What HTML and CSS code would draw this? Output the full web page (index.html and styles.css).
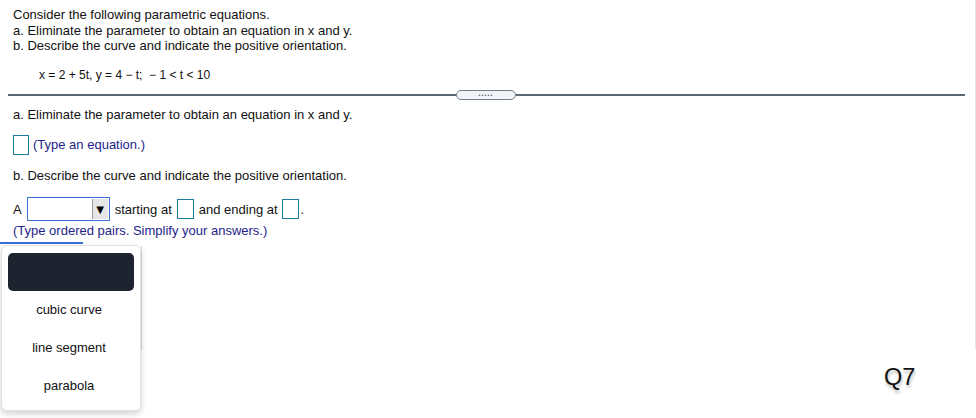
FILE: index.html
```html
<!DOCTYPE html>
<html>
<head>
<meta charset="utf-8">
<link rel="stylesheet" href="styles.css">
</head>
<body>
<div class="page">
  <p class="line">Consider the following parametric equations.</p>
  <p class="line">a. Eliminate the parameter to obtain an equation in x and y.</p>
  <p class="line">b. Describe the curve and indicate the positive orientation.</p>
  <p class="line equation">x = 2 + 5t, y = 4 − t; &nbsp;− 1 &lt; t &lt; 10</p>

  <div class="divider">
    <span class="rule rule-left"></span>
    <span class="pill"><span class="dots">•••••</span></span>
    <span class="rule rule-right"></span>
  </div>

  <p class="line part-a">a. Eliminate the parameter to obtain an equation in x and y.</p>
  <div class="answer-row">
    <span class="box"></span>
    <span class="hint">(Type an equation.)</span>
  </div>

  <p class="line part-b">b. Describe the curve and indicate the positive orientation.</p>
  <div class="select-row">
    <span class="word-a">A</span>
    <span class="select"><span class="select-arrow">▼</span></span>
    <span class="txt">starting at</span>
    <span class="box box-start"></span>
    <span class="txt">and ending at</span>
    <span class="box box-end"></span>
    <span class="txt">.</span>
  </div>
  <p class="line hint hint-pairs">(Type ordered pairs. Simplify your answers.)</p>
  <div class="focus-line"></div>
</div>

<div class="behind-edge"></div>
<div class="menu">
  <div class="option option-active"></div>
  <div class="option">cubic curve</div>
  <div class="option">line segment</div>
  <div class="option">parabola</div>
</div>

<div class="page-edge"></div>
<div class="qlabel">Q7</div>
</body>
</html>
```
FILE: styles.css
```css
html, body {
  margin: 0;
  padding: 0;
  background: #ffffff;
}
body {
  width: 976px;
  height: 418px;
  position: relative;
  overflow: hidden;
  font-family: "Liberation Sans", Arial, sans-serif;
  font-size: 13px;
  color: #111;
}
.page {
  padding: 7px 0 0 13px;
}
.line {
  margin: 0;
  line-height: 15.5px;
}
.equation {
  margin-top: 14px;
  padding-left: 26px;
  font-size: 12px;
}
.divider {
  display: flex;
  align-items: center;
  margin: 7px 0 0 -5px;
  width: 957px;
  height: 10px;
}
.rule {
  height: 1.5px;
  background: #5d6877;
}
.rule-left { width: 448px; }
.rule-right { flex: 1; }
.pill {
  width: 58px;
  height: 8px;
  border: 1px solid #737d8a;
  border-radius: 6px;
  background: #f1f3f6;
  display: flex;
  align-items: center;
  justify-content: center;
}
.dots {
  font-size: 5px;
  letter-spacing: 1.2px;
  color: #4f5866;
  line-height: 5px;
}
.part-a { margin-top: 7px; }
.answer-row {
  display: flex;
  align-items: center;
  margin-top: 12px;
  height: 20px;
}
.box {
  display: inline-block;
  box-sizing: border-box;
  width: 16px;
  height: 20px;
  border: 1.5px solid #1f7d9c;
  background: #fff;
}
.hint {
  color: #1e1e8a;
  line-height: 15px;
}
.answer-row .hint { margin-left: 4px; }
.part-b { margin-top: 13px; }
.select-row {
  display: flex;
  align-items: center;
  margin-top: 14px;
  height: 24px;
}
.word-a { margin-right: 5px; }
.select {
  box-sizing: border-box;
  width: 83px;
  height: 24px;
  border: 1px solid #3b6fd6;
  display: flex;
  justify-content: flex-end;
  align-items: stretch;
  padding: 1px;
  margin-right: 5px;
}
.select-arrow {
  width: 15px;
  background: #e6e6e6;
  border-left: 1px solid #9a9a9a;
  font-size: 13px;
  line-height: 21px;
  text-align: center;
  color: #000;
}
.box-start { width: 17px; margin: 0 5px 0 5px; }
.box-end { width: 17px; margin: 0 2px 0 4px; }
.hint-pairs { margin-top: 2px; }
.focus-line {
  margin: 4px 0 0 -13px;
  width: 83px;
  height: 1.5px;
  background: #3b6fd6;
}
.behind-edge {
  position: absolute;
  left: 141px;
  top: 246px;
  width: 1px;
  height: 104px;
  background: #dcdcdc;
}
.menu {
  position: absolute;
  left: 1px;
  top: 245px;
  box-sizing: border-box;
  width: 140px;
  height: 166px;
  padding: 7px 6px 6px 6px;
  background: #fff;
  border: 1px solid #e3e3e3;
  border-radius: 6px;
  box-shadow: 0 3px 6px rgba(0, 0, 0, 0.18);
}
.option {
  height: 38px;
  line-height: 38px;
  text-align: center;
  padding-right: 4px;
  color: #111;
  border-radius: 5px;
}
.option-active {
  background: #1e2330;
  padding-right: 0;
}
.page-edge {
  position: absolute;
  right: 0;
  top: 0;
  width: 1px;
  height: 349px;
  background: #e4e4e4;
}
.qlabel {
  position: absolute;
  left: 884px;
  top: 363px;
  font-size: 23.5px;
  line-height: 28px;
  color: #111;
  text-shadow: 1px 3px 3px rgba(0, 0, 0, 0.25);
}
```
